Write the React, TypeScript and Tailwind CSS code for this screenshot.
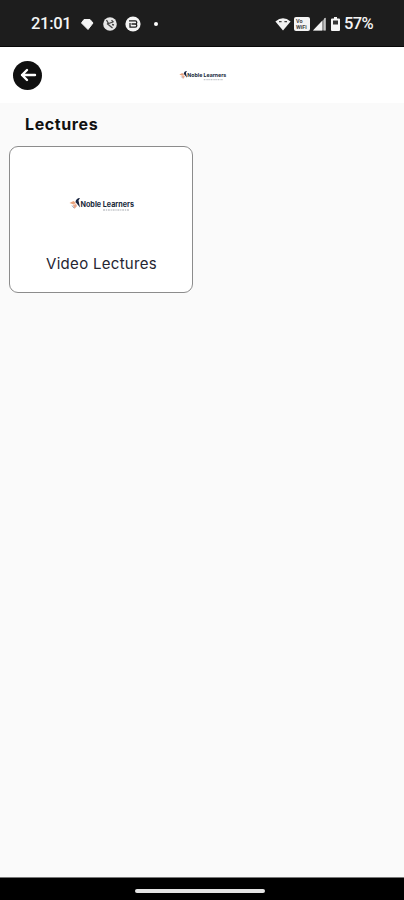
import React from 'react';

interface LogoProps {
    className?: string;
}

const Logo: React.FC<LogoProps> = ({ className }) => (
    <svg viewBox="0 0 66 16" className={className} role="img" aria-label="Noble Learners">
        <path d="M.5 6l4-2 2.5 2-2.5 1.5z" fill="#e8a27c" />
        <path d="M4 8l3-1 1 2-2.5 3z" fill="#eba98c" />
        <path d="M3 8.5l2 2.5" stroke="#9aa6bd" strokeWidth="1" />
        <path d="M6.5 5C7 2.5 8 1.2 11 1L9.5 3.5 11 10.5 9 8z" fill="#17233f" />
        <text x="11.5" y="9.8" textLength="53.5" lengthAdjust="spacingAndGlyphs" fontFamily="Inter, sans-serif" fontSize="7.4" fontWeight="700" fill="#17293a">Noble Learners</text>
        <path d="M34 13H60" stroke="#c3c6ca" strokeWidth="1.6" strokeDasharray="2 .8 1.2 .8" />
    </svg>
);

const StatusBar: React.FC = () => (
    <div className="flex h-[47px] shrink-0 items-center justify-between border-b border-[#080808] bg-[#1d1d1d] px-[31px] pt-[2px] text-[#f4f4f4]">
        <div className="flex items-center">
            <span className="w-[40px] whitespace-nowrap font-[Roboto,sans-serif] text-[16.5px] font-medium leading-none tracking-[-0.3px]">21:01</span>
            <svg viewBox="0 0 14 14" className="ml-[9px] size-[14px]" fill="currentColor" stroke="currentColor">
                <path d="M4 2.5h6L13 6 8 12.5 1.5 6z" strokeWidth="1" strokeLinejoin="round" />
            </svg>
            <svg viewBox="0 0 14 14" className="ml-[9px] size-[14px]">
                <circle cx="7" cy="7" r="6.8" fill="#e6e6e6" />
                <path d="M3.5 3l2 3.5L10 5M8.5 3.2l2 2M4 6.5l5.5 4.5M9 7.5l2 .5" fill="none" stroke="#444" strokeWidth="1.3" />
            </svg>
            <svg viewBox="0 0 16 16" className="ml-[8px] size-[16px]">
                <circle cx="8" cy="8" r="7.6" fill="#f5f5f5" />
                <path d="M4 4.8h6.2a1.6 1.6 0 010 3.2H6.5M10.2 8a1.6 1.6 0 010 3.2H5V7" fill="none" stroke="#222" strokeWidth="1.3" />
            </svg>
            <span className="ml-[13px] size-[4px] rounded-full bg-white" />
        </div>
        <div className="flex items-center">
            <svg viewBox="0 0 16 14" className="h-[14px] w-[16px]">
                <path d="M.4 4.5Q8-2 15.6 4.5L8 13.5z" fill="#f4f4f4" />
                <path d="M4 4.6h2.6M9.4 4.6H12" fill="none" stroke="#444" strokeWidth="1.4" />
            </svg>
            <svg viewBox="0 0 16 14" className="ml-[3px] h-[14px] w-[16px]">
                <rect width="16" height="14" rx="2" fill="#f4f4f4" />
                <text x="2" y="6.4" fontFamily="Roboto, sans-serif" fontSize="5.5" fontWeight="700" fill="#444">Vo</text>
                <text x="2" y="12" fontFamily="Roboto, sans-serif" fontSize="5.5" fontWeight="700" fill="#444">WiFi</text>
            </svg>
            <svg viewBox="0 0 13 14" className="ml-[3px] h-[14px] w-[13px]">
                <path d="M0 13.5L12.5.5v13z" fill="#999" />
                <path d="M0 13.5L9 4v9.5z" fill="#f4f4f4" />
                <path d="M12 1v12.5" stroke="#eee" strokeWidth="1" />
            </svg>
            <svg viewBox="0 0 9 14" className="ml-[5px] h-[14px] w-[9px]">
                <path d="M3 0h3v1.5h2Q9 1.5 9 2.5V13q0 1-1 1H1q-1 0-1-1V2.5q0-1 1-1h2z" fill="#f4f4f4" />
                <rect x="2" y="3.5" width="5" height="4" fill="#333" />
            </svg>
            <span className="ml-[4px] w-[29px] whitespace-nowrap font-[Roboto,sans-serif] text-[16.5px] font-medium leading-none tracking-[-0.6px]">57%</span>
        </div>
    </div>
);

const Header: React.FC = () => (
    <header className="flex h-[56px] shrink-0 items-center bg-white px-[13px]">
        <button type="button" aria-label="Back" className="flex size-[29px] items-center justify-center rounded-full bg-[#101010]">
            <svg viewBox="0 0 18 18" className="size-[18px]" fill="none" stroke="white" strokeWidth="2.4" strokeLinecap="round" strokeLinejoin="round">
                <path d="M16 9H3M8 4L3 9l5 5" />
            </svg>
        </button>
        <div className="flex flex-1 justify-center">
            <Logo className="ml-[-5px] mt-[1px] h-[12px] w-[48px]" />
        </div>
        <div className="w-[22px]" />
    </header>
);

const App: React.FC = () => {
    return (
        <div className="flex h-screen flex-col overflow-hidden bg-[#fafafa] font-[Inter,sans-serif]">
            <StatusBar />
            <Header />
            <main className="flex-1 px-[9px]">
                <h1 className="ml-[16px] mt-[9px] text-[16px] font-bold leading-[24px] tracking-[0.6px] text-[#111111]">Lectures</h1>
                <button type="button" className="mt-[10px] flex h-[147px] w-[184px] flex-col items-center rounded-[9px] border border-[#8c8c8c] bg-white">
                    <Logo className="ml-[1px] mt-[50px] h-[16px] w-[66px]" />
                    <span className="ml-[1px] mt-[40px] whitespace-nowrap text-[15px] leading-[22px] tracking-[0.3px] text-[#252532]">Video Lectures</span>
                </button>
            </main>
            <div className="flex h-[23px] shrink-0 items-center justify-center border-t border-[#777777] bg-black">
                <div className="mr-[4px] mt-[3px] h-[4px] w-[130px] rounded-full bg-[#e4e4e4]" />
            </div>
        </div>
    );
};

export default App;
